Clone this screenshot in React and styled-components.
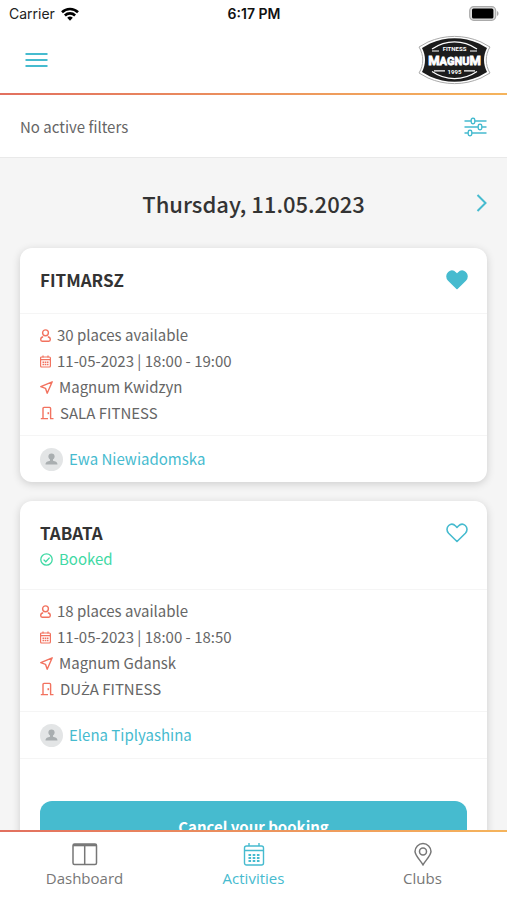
import React from "react"
import styled, { createGlobalStyle } from "styled-components"

const teal = "#46bbcf"
const coral = "#f2725f"
const green = "#3fd9a4"
const gradient = "linear-gradient(90deg, #e2705f, #f5b45c)"

const GlobalStyle = createGlobalStyle`
  * {
    box-sizing: border-box;
  }
  body {
    margin: 0;
    background: #f5f5f5;
    color: #666;
    font-family: "Noto Sans CJK SC", "Open Sans", sans-serif;
    font-size: 15px;
    line-height: 26px;
  }
  svg {
    display: block;
    flex: none;
  }
`

const Screen = styled.div`
  display: flex;
  flex-direction: column;
  height: 100vh;
`

const StatusBar = styled.div`
  display: grid;
  grid-template-columns: 1fr auto 1fr;
  align-items: center;
  flex: none;
  height: 27px;
  padding: 0 8px 0 9px;
  background: #fff;
  color: #222;
  font-family: Inter, sans-serif;
  font-size: 14px;
`

const Carrier = styled.span`
  display: flex;
  align-items: center;
  gap: 6px;
`

const Clock = styled.span`
  color: #111;
  font-weight: 600;
`

const Battery = styled.span`
  justify-self: end;
`

const Header = styled.header`
  display: flex;
  align-items: center;
  justify-content: space-between;
  flex: none;
  height: 66px;
  padding: 0 15px 0 25px;
  background: #fff;
`

const GradientLine = styled.div`
  flex: none;
  height: 2px;
  background: ${gradient};
`

const IconButton = styled.button`
  display: flex;
  align-items: center;
  min-height: 26px;
  padding: 0;
  border: 0;
  background: none;
  color: ${teal};
  cursor: pointer;
`

const Filters = styled.div`
  display: flex;
  align-items: center;
  justify-content: space-between;
  flex: none;
  height: 63px;
  padding: 1px 20px 0;
  border-bottom: 1px solid #e9e9e9;
  background: #fff;
`

const Content = styled.main`
  flex: 1;
  min-height: 0;
  overflow: hidden;
  padding: 0 20px;
`

const DayBar = styled.div`
  display: grid;
  grid-template-columns: 1fr auto 1fr;
  align-items: center;
  height: 90px;
`

const Day = styled.h1`
  grid-column: 2;
  margin: 0;
  color: #333;
  font-size: 22px;
  font-weight: 500;
`

const NextButton = styled(IconButton)`
  justify-self: end;
`

const Card = styled.article`
  margin-bottom: 19px;
  border-radius: 12px;
  background: #fff;
  box-shadow: 0 2px 8px rgba(0, 0, 0, 0.16);
`

const CardHead = styled.div`
  display: flex;
  align-items: flex-start;
  justify-content: space-between;
  min-height: 65px;
  padding: 19px 19px 17px 20px;
`

const Title = styled.h2`
  margin: 0;
  color: #333;
  font-size: 17px;
  font-weight: 700;
  line-height: 26px;
`

const Line = styled.div`
  display: flex;
  align-items: center;
  gap: 6px;
  color: ${(props) => props.$color || "#666"};

  svg {
    color: ${(props) => props.$color || coral};
  }
`

const Details = styled.div`
  padding: 8px 20px 9px;
  border-top: 1px solid #f5f5f5;
  border-bottom: 1px solid #f5f5f5;
`

const Accented = styled.span`
  font-family: "Open Sans", sans-serif;
`

const Trainer = styled.a`
  display: flex;
  align-items: center;
  gap: 6px;
  height: 46px;
  padding: 0 20px;
  color: ${teal};
  text-decoration: none;
`

const Actions = styled.div`
  padding: 42px 20px 20px;
  border-top: 1px solid #f5f5f5;
`

const CancelButton = styled.button`
  width: 100%;
  height: 52px;
  border: 0;
  border-radius: 12px;
  background: ${teal};
  color: #fff;
  font: inherit;
  font-weight: 700;
`

const Tabs = styled.nav`
  display: grid;
  grid-template-columns: repeat(3, 1fr);
  flex: none;
  height: 68px;
  background: #fff;
`

const Tab = styled.a`
  display: flex;
  flex-direction: column;
  align-items: center;
  padding-top: 10px;
  color: ${(props) => (props.$active ? teal : "#777")};
  font-family: "Open Sans", sans-serif;
  font-size: 15px;
  line-height: 24px;
  text-decoration: none;
`

const WifiIcon = () => (
  <svg width="18" height="14" viewBox="0 0 18 14" fill="none" stroke="#000" strokeWidth="2.6">
    <path d="M1 5.3a11.5 11.5 0 0 1 16 0M3.9 8.5a7.3 7.3 0 0 1 10.2 0" />
    <path d="M6.2 10.8a4.1 4.1 0 0 1 5.6 0L9 13.8z" fill="#000" stroke="none" />
  </svg>
)

const BatteryIcon = () => (
  <svg width="30" height="15" viewBox="0 0 30 15">
    <rect x="0.7" y="0.7" width="26" height="13.6" rx="4" fill="#ddd" stroke="#aaa" strokeWidth="1.2" />
    <rect x="3" y="2.6" width="21.4" height="9.8" rx="1.5" fill="#000" />
    <path d="M28 5v5c2-.7 2-4.3 0-5z" fill="#aaa" />
  </svg>
)

const MenuIcon = () => (
  <svg width="23" height="16" viewBox="0 0 23 16" stroke="currentColor" strokeWidth="2">
    <path d="M.5 2h22M.5 8h22M.5 14h22" />
  </svg>
)

const Logo = () => (
  <svg width="75" height="50" viewBox="0 0 75 50" role="img" aria-label="Fitness Magnum 1995">
    <path
      d="M11 7C28-.5 47-.5 64 7l9 5c-5 8-5 18 0 26l-9 5c-17 7.5-36 7.5-53 0l-9-5c5-8 5-18 0-26z"
      fill="#fff"
      stroke="#aaa"
      strokeWidth="1"
    />
    <path d="M13 8.5C29 1.5 46 1.5 62 8.5l8 4.5c-4 8-4 16 0 24l-8 4.5c-16 7-33 7-49 0L5 37c4-8 4-16 0-24z" fill="#1c1c1c" />
    <g fill="none" stroke="#fff" strokeWidth="1.2">
      <path d="M15 14C29 4.5 46 4.5 60 14M15 36.5c14 9.5 31 9.5 45 0" />
      <path d="M15 16h7M53 16h7M17 35.8h11M47 35.8h11" />
    </g>
    <g fill="#fff" textAnchor="middle" fontWeight="700" fontFamily="Roboto, sans-serif">
      <text x="37.5" y="16" fontSize="6">FITNESS</text>
      <text x="37.5" y="30" fontSize="11" stroke="#fff" strokeWidth="0.8">
        <tspan fontSize="13">M</tspan>AGNU<tspan fontSize="13">M</tspan>
      </text>
      <text x="37.5" y="39" fontSize="6">1995</text>
    </g>
  </svg>
)

const SlidersIcon = () => (
  <svg width="23" height="20" viewBox="0 0 23 20" fill="none" stroke="currentColor" strokeWidth="1.4">
    <path d="M.5 4h6.5M11 4h11.5M.5 10h13.5M18 10h4.5M.5 16h3.5M8 16h14.5" />
    <rect x="7.2" y="1.3" width="3.6" height="5.4" rx="1.6" />
    <rect x="14.2" y="7.3" width="3.6" height="5.4" rx="1.6" />
    <rect x="4.2" y="13.3" width="3.6" height="5.4" rx="1.6" />
  </svg>
)

const ChevronIcon = () => (
  <svg width="11" height="20" viewBox="0 0 11 20" fill="none" stroke="currentColor" strokeWidth="2">
    <path d="M1.5 2l8 8-8 8" />
  </svg>
)

const HeartIcon = ({ filled }) => (
  <svg width="22" height="20" viewBox="0 0 22 20" fill={filled ? "currentColor" : "none"} stroke="currentColor" strokeWidth="1.6" strokeLinejoin="round">
    <path d="M11 18.5L2.6 10.2C.4 7.9.5 4.4 2.7 2.5c2.2-1.8 5-1.4 6.9.5L11 4.5 12.4 3c1.9-1.9 4.7-2.3 6.9-.5 2.2 1.9 2.3 5.400.1 7.7z" />
  </svg>
)

const PersonIcon = () => (
  <svg width="11" height="13" viewBox="0 0 11 13" fill="none" stroke="currentColor" strokeWidth="1.4">
    <circle cx="5.5" cy="3.8" r="2.9" />
    <path d="M3.2 7.7C1.7 7.9.7 9 .7 10.6c0 1 .5 1.6 1.4 1.6h6.8c.9 0 1.4-.6 1.4-1.6 0-1.6-1-2.7-2.5-2.900" />
  </svg>
)

const SmallCalendarIcon = () => (
  <svg width="11" height="13" viewBox="0 0 11 13" fill="none" stroke="currentColor" strokeWidth="1.2">
    <rect x="0.6" y="2" width="9.8" height="10" rx="1" />
    <path d="M.5 4.7h10M3 .5v2M8 .5v2" />
    <path d="M2.5 7.2h6M2.5 9.5h6" strokeWidth="1.6" strokeDasharray="1.6 .6" />
  </svg>
)

const ArrowIcon = () => (
  <svg width="13" height="13" viewBox="0 0 13 13" fill="none" stroke="currentColor" strokeWidth="1.4" strokeLinejoin="round">
    <path d="M12.2.8L.8 5.7l4.7 1.6 1.7 4.9z" />
  </svg>
)

const DoorIcon = () => (
  <svg width="14" height="14" viewBox="0 0 14 14" fill="none" stroke="currentColor" strokeWidth="1.4">
    <path d="M.8 12.6H8M3 12.6V2.4a1 1 0 0 1 1-1h5.6a1 1 0 0 1 1 1v10.2M10 12.6h3.5" />
    <path d="M8.3 6.2v2" strokeWidth="1.6" />
  </svg>
)

const CheckIcon = () => (
  <svg width="13" height="13" viewBox="0 0 13 13" fill="none" stroke="currentColor" strokeWidth="1.3">
    <circle cx="6.5" cy="6.5" r="5.7" />
    <path d="M3.6 6.6l2.2 2.2 3.8-4.2" />
  </svg>
)

const AvatarIcon = () => (
  <svg width="23" height="23" viewBox="0 0 23 23">
    <circle cx="11.5" cy="11.5" r="11.5" fill="#e3e5e6" />
    <circle cx="11.5" cy="8.5" r="3.1" fill="#a9aeb0" />
    <path d="M5.5 16.5c0-2.5 2.3-3.2 4.5-3.7v-2h3v2c2.2.5 4.5 1.2 4.5 3.7z" fill="#a9aeb0" />
  </svg>
)

const DashboardIcon = () => (
  <svg width="26" height="24" viewBox="0 0 26 24" fill="none" stroke="currentColor" strokeWidth="1.5">
    <rect x="1" y="2" width="23.5" height="20.5" rx="1.5" />
    <path d="M1 3.2h23.5" strokeWidth="2.2" />
    <path d="M12.7 3v19.5" />
  </svg>
)

const CalendarIcon = () => (
  <svg width="22" height="24" viewBox="0 0 22 24" fill="none" stroke="currentColor" strokeWidth="1.4">
    <rect x="1.5" y="4" width="19" height="19" rx="2" />
    <path d="M1.5 8.5h19M6 1v3M16 1v3" />
    <path d="M5.5 13h11M5.5 16h11M5.5 19h11" strokeWidth="2.2" strokeDasharray="2.6 1.6" />
  </svg>
)

const PinIcon = () => (
  <svg width="18" height="24" viewBox="0 0 18 24" fill="none" stroke="currentColor" strokeWidth="1.5">
    <path d="M9 22.8C6.5 18.5 1 13.5 1 9.6a8 8 0 0 1 16 0c0 3.9-5.5 8.9-8 13.2z" />
    <circle cx="9" cy="9.6" r="3.5" />
  </svg>
)

const ActivityCard = ({ name, booked, favourite, places, time, club, room, trainer }) => (
  <Card>
    <CardHead>
      <div>
        <Title>{name}</Title>
        {booked && (
          <Line $color={green}>
            <CheckIcon />
            Booked
          </Line>
        )}
      </div>
      <IconButton aria-label="Favourite" aria-pressed={favourite}>
        <HeartIcon filled={favourite} />
      </IconButton>
    </CardHead>
    <Details>
      <Line><PersonIcon />{places} places available</Line>
      <Line><SmallCalendarIcon />{time}</Line>
      <Line><ArrowIcon />{club}</Line>
      <Line><DoorIcon /><span>{room}</span></Line>
    </Details>
    <Trainer href="#trainer">
      <AvatarIcon />
      {trainer}
    </Trainer>
    {booked && (
      <Actions>
        <CancelButton>Cancel your booking</CancelButton>
      </Actions>
    )}
  </Card>
)

const App = () => {
  return (
    <Screen>
      <GlobalStyle />
      <StatusBar>
        <Carrier>
          Carrier
          <WifiIcon />
        </Carrier>
        <Clock>6:17 PM</Clock>
        <Battery>
          <BatteryIcon />
        </Battery>
      </StatusBar>
      <Header>
        <IconButton aria-label="Menu">
          <MenuIcon />
        </IconButton>
        <Logo />
      </Header>
      <GradientLine />
      <Filters>
        <span>No active filters</span>
        <IconButton aria-label="Filters">
          <SlidersIcon />
        </IconButton>
      </Filters>
      <Content>
        <DayBar>
          <Day>Thursday, 11.05.2023</Day>
          <NextButton aria-label="Next day">
            <ChevronIcon />
          </NextButton>
        </DayBar>
        <ActivityCard
          name="FITMARSZ"
          favourite
          places={30}
          time="11-05-2023 | 18:00 - 19:00"
          club="Magnum Kwidzyn"
          room="SALA FITNESS"
          trainer="Ewa Niewiadomska"
        />
        <ActivityCard
          name="TABATA"
          booked
          favourite={false}
          places={18}
          time="11-05-2023 | 18:00 - 18:50"
          club="Magnum Gdansk"
          room={<>DU<Accented>Ż</Accented>A FITNESS</>}
          trainer="Elena Tiplyashina"
        />
      </Content>
      <GradientLine />
      <Tabs>
        <Tab href="#dashboard">
          <DashboardIcon />
          Dashboard
        </Tab>
        <Tab href="#activities" $active>
          <CalendarIcon />
          Activities
        </Tab>
        <Tab href="#clubs">
          <PinIcon />
          Clubs
        </Tab>
      </Tabs>
    </Screen>
  )
}

export default App
